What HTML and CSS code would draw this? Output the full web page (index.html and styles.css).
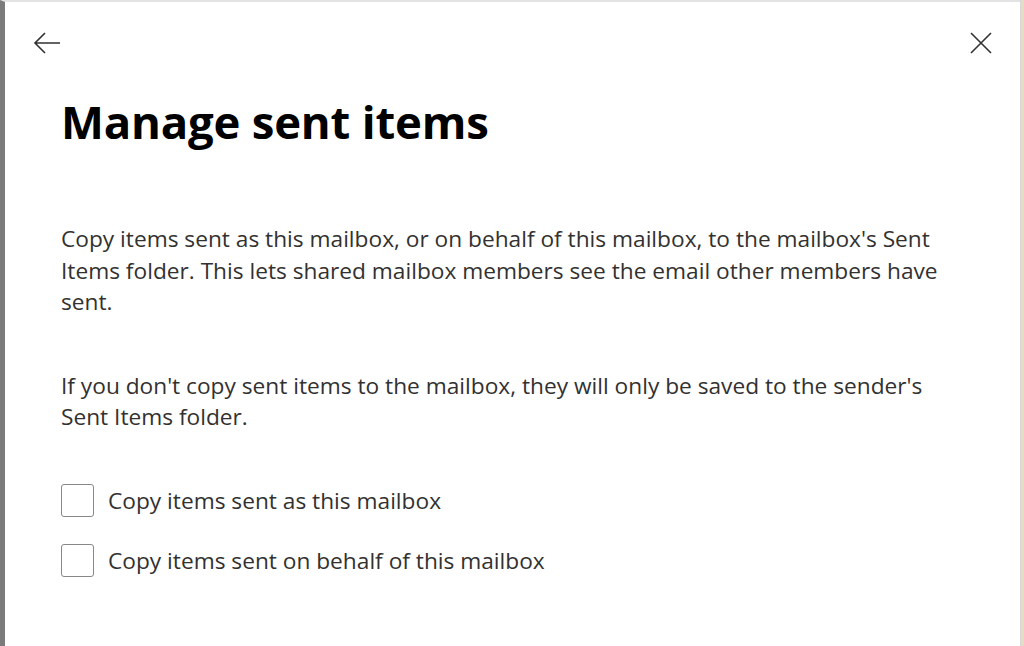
FILE: index.html
```html
<!DOCTYPE html>
<html lang="en">
<head>
<meta charset="utf-8">
<title>Manage sent items</title>
<link rel="stylesheet" href="styles.css">
</head>
<body>
<div class="frame">
  <div class="panel">
    <div class="topbar">
      <button class="iconbtn back" aria-label="Back">
        <svg width="28" height="24" viewBox="0 0 28 24"><path d="M27 12H2M12 2L2 12l10 10" fill="none" stroke="#323130" stroke-width="1.6"/></svg>
      </button>
      <button class="iconbtn close" aria-label="Close">
        <svg width="22" height="22" viewBox="0 0 22 22"><path d="M1 1l20 20M21 1L1 21" fill="none" stroke="#323130" stroke-width="1.6"/></svg>
      </button>
    </div>
    <h1 class="title">Manage sent items</h1>
    <p class="desc">Copy items sent as this mailbox, or on behalf of this mailbox, to the mailbox's Sent Items folder. This lets shared mailbox members see the email other members have sent.</p>
    <p class="desc second">If you don't copy sent items to the mailbox, they will only be saved to the sender's Sent Items folder.</p>
    <div class="options">
      <label class="check"><span class="box"></span><span class="label">Copy items sent as this mailbox</span></label>
      <label class="check"><span class="box"></span><span class="label">Copy items sent on behalf of this mailbox</span></label>
    </div>
  </div>
  <div class="rightedge"></div>
</div>
</body>
</html>
```
FILE: styles.css
```css
html, body {
  margin: 0;
  padding: 0;
  height: 100%;
  background: #ffffff;
}
body {
  font-family: "Open Sans", "Noto Sans", sans-serif;
  color: #323130;
}
.frame {
  display: flex;
  height: 646px;
  overflow: hidden;
}
.panel {
  flex: 1;
  border-left: 5px solid #7b7b7b;
  border-top: 2px solid #e3e3e3;
  padding: 0 0 0 56px;
  box-sizing: border-box;
}
.rightedge {
  width: 3px;
  background: #e6dcc6;
  border-left: 1px solid #d8d8d8;
}
.topbar {
  display: flex;
  justify-content: space-between;
  align-items: center;
  margin-left: -28px;
  padding-top: 27px;
  padding-right: 28px;
  height: 28px;
}
.iconbtn {
  background: none;
  border: 0;
  padding: 0;
  display: flex;
  align-items: center;
  justify-content: center;
}
.title {
  margin: 36px 0 0 0;
  font-size: 45.5px;
  font-weight: 700;
  color: #000;
  line-height: 56px;
  letter-spacing: -0.2px;
}
.desc {
  margin: 74px 0 0 0;
  font-size: 22.7px;
  line-height: 31.6px;
  max-width: 904px;
}
.desc.second {
  margin-top: 52px;
}
.options {
  display: flex;
  flex-direction: column;
  gap: 27px;
  margin-top: 51px;
}
.check {
  display: flex;
  align-items: center;
  gap: 14px;
  font-size: 22.7px;
}
.box {
  width: 31px;
  height: 31px;
  border: 1px solid #8a8886;
  border-radius: 3px;
  flex: none;
}
```
